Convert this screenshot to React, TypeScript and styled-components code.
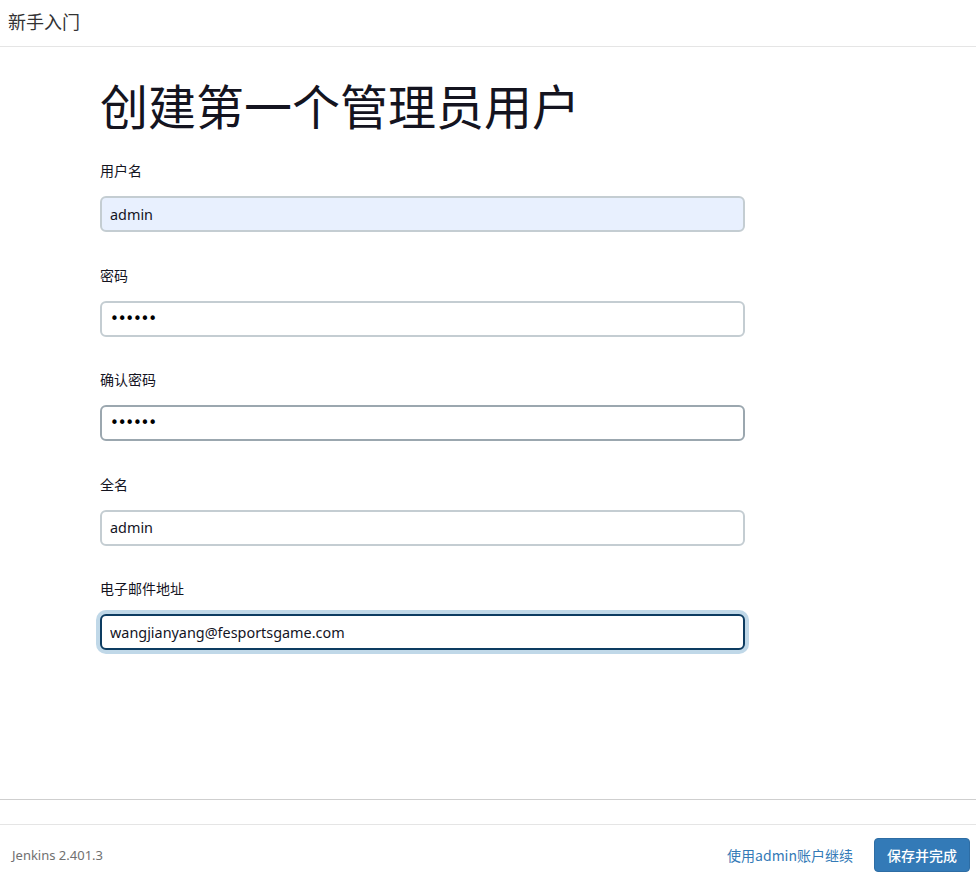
import React from "react";
import styled, { createGlobalStyle, css } from "styled-components";

const Global = createGlobalStyle`
  html, body { margin: 0; padding: 0; background: #fff; }
  body {
    font-family: "Noto Sans", "Noto Sans CJK SC", sans-serif;
    color: #333;
  }
  * { box-sizing: border-box; }
`;

const Page = styled.div`
  width: 976px;
  height: 875px;
  display: flex;
  flex-direction: column;
  background: #fff;
  overflow: hidden;
`;

const Header = styled.header`
  height: 47px;
  flex: none;
  display: flex;
  align-items: center;
  padding: 0 0 4px 8px;
  border-bottom: 1px solid #e5e5e5;
  font-family: "Noto Sans CJK SC", sans-serif;
  font-size: 18px;
  color: #333;
`;

const Body = styled.main`
  height: 753px;
  flex: none;
  border-bottom: 1px solid #cfcfcf;
  padding: 29px 0 0 100px;
`;

const Title = styled.h1`
  margin: 0 0 28px 0;
  font-family: "Noto Sans CJK SC", sans-serif;
  font-weight: 400;
  font-size: 48px;
  line-height: 56px;
  color: #14141f;
`;

const Field = styled.div`
  width: 645px;
  margin-bottom: 32.5px;
`;

const Label = styled.label`
  display: block;
  font-family: "Noto Sans CJK SC", sans-serif;
  font-size: 14px;
  line-height: 20px;
  color: #14141f;
  margin-bottom: 16px;
`;

type Variant = "autofill" | "normal" | "hover" | "focus";

const Input = styled.input<{ $variant: Variant }>`
  display: block;
  width: 100%;
  height: 36px;
  padding: 0 8px;
  border: 2px solid #c4cdd2;
  border-radius: 6px;
  background: #fff;
  font-family: "Noto Sans", "Noto Sans CJK SC", sans-serif;
  font-size: 14.4px;
  color: #14141f;
  outline: none;
  ${(p) =>
    p.$variant === "autofill" &&
    css`
      background: #e8f0fe;
    `}
  ${(p) =>
    p.$variant === "hover" &&
    css`
      border-color: #9ba7af;
    `}
  ${(p) =>
    p.$variant === "focus" &&
    css`
      border-color: #0d3c61;
      box-shadow: 0 0 0 4px #c0d8e8;
    `}
  &[type="password"] {
    font-family: "DejaVu Sans", sans-serif;
    font-size: 15px;
    letter-spacing: -1.2px;
    color: #000;
  }
`;

const Spacer = styled.div`
  height: 24px;
  flex: none;
`;

const Footer = styled.footer`
  flex: none;
  height: 64px;
  border-top: 1px solid #e5e5e5;
  display: flex;
  align-items: flex-start;
  padding: 13px 6px 0 12px;
`;

const Version = styled.span`
  font-family: "Noto Sans", sans-serif;
  font-size: 13px;
  line-height: 34px;
  color: #707070;
  margin-right: auto;
`;

const Link = styled.a`
  font-family: "Noto Sans CJK SC", sans-serif;
  font-size: 14px;
  line-height: 34px;
  color: #337ab7;
  text-decoration: none;
  margin-right: 21px;
  cursor: pointer;
`;

const Button = styled.button`
  height: 34px;
  padding: 0 12px;
  border: 1px solid #2e6da4;
  border-radius: 4px;
  background: #337ab7;
  color: #fff;
  font-family: "Noto Sans CJK SC", sans-serif;
  font-size: 14px;
  font-weight: 500;
  cursor: pointer;
`;

const fields: { label: string; value: string; type: string; variant: Variant }[] = [
  { label: "用户名", value: "admin", type: "text", variant: "autofill" },
  { label: "密码", value: "123456", type: "password", variant: "normal" },
  { label: "确认密码", value: "123456", type: "password", variant: "hover" },
  { label: "全名", value: "admin", type: "text", variant: "normal" },
  { label: "电子邮件地址", value: "wangjianyang@fesportsgame.com", type: "text", variant: "focus" },
];

export default function App() {
  return (
    <Page>
      <Global />
      <Header>新手入门</Header>
      <Body>
        <Title>创建第一个管理员用户</Title>
        {fields.map((f) => (
          <Field key={f.label}>
            <Label>{f.label}</Label>
            <Input $variant={f.variant} type={f.type} defaultValue={f.value} readOnly />
          </Field>
        ))}
      </Body>
      <Spacer />
      <Footer>
        <Version>Jenkins 2.401.3</Version>
        <Link>使用admin账户继续</Link>
        <Button>保存并完成</Button>
      </Footer>
    </Page>
  );
}
